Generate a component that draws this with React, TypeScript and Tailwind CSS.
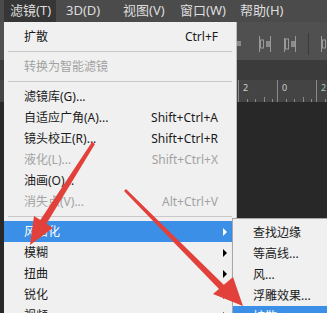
import clsx from 'clsx';

const font = { fontFamily: '"Noto Sans", "Noto Sans CJK SC", sans-serif' };

const topMenus = [
  { label: '滤镜(T)', w: 'w-[52px] pl-[6px] bg-[#363636]' },
  { label: '3D(D)', w: 'w-[57px] pl-[10px]' },
  { label: '视图(V)', w: 'w-[57px] pl-[10px]' },
  { label: '窗口(W)', w: 'w-[60px] pl-[10px]' },
  { label: '帮助(H)', w: 'w-[60px] pl-[10px]' },
];

type Row =
  | { sep: true }
  | { sep?: false; label: string; shortcut?: string; disabled?: boolean; sub?: boolean; active?: boolean };

const filterMenu: Row[] = [
  { label: '扩散', shortcut: 'Ctrl+F' },
  { sep: true },
  { label: '转换为智能滤镜', disabled: true },
  { sep: true },
  { label: '滤镜库(G)...' },
  { label: '自适应广角(A)...', shortcut: 'Shift+Ctrl+A' },
  { label: '镜头校正(R)...', shortcut: 'Shift+Ctrl+R' },
  { label: '液化(L)...', shortcut: 'Shift+Ctrl+X', disabled: true },
  { label: '油画(O)...' },
  { label: '消失点(V)...', shortcut: 'Alt+Ctrl+V', disabled: true },
  { sep: true },
  { label: '风格化', sub: true, active: true },
  { label: '模糊', sub: true },
  { label: '扭曲', sub: true },
  { label: '锐化', sub: true },
  { label: '视频', sub: true },
];

const stylizeMenu = [
  { label: '查找边缘' },
  { label: '等高线...' },
  { label: '风...' },
  { label: '浮雕效果...' },
  { label: '扩散...', active: true },
];

const rulerMarks = [
  { n: '2', color: 'text-[#cfcfcf]' },
  { n: '0', color: 'text-[#cfcfcf]' },
  { n: '2', color: 'text-[#9fd0b0]' },
];

function MenuRow({ row }: { row: Row }) {
  if (row.sep) {
    return <div className="mx-[4px] my-[4px] h-px bg-[#c9c9c9]" />;
  }
  return (
    <div
      className={clsx(
        'flex h-[21px] items-center pl-[20px] pr-[9px] text-[12px] whitespace-nowrap',
        row.active ? 'bg-[#3b8fe6] text-white' : row.disabled ? 'text-[#a2a2a2]' : 'text-[#1a1a1a]'
      )}
    >
      <span className="flex-1">{row.label}</span>
      {row.shortcut && <span>{row.shortcut}</span>}
      <span className="ml-[5px] flex w-[4px] justify-end">
        {row.sub && (
          <span
            className={clsx(
              'h-0 w-0 border-y-[4px] border-l-[4px] border-y-transparent',
              row.active ? 'border-l-white' : 'border-l-black'
            )}
          />
        )}
      </span>
    </div>
  );
}

function AlignIcon({ variant }: { variant: number }) {
  return (
    <svg width="14" height="18" viewBox="0 0 14 18" className="shrink-0">
      {variant === 0 && (
        <>
          <rect x="1" y="1" width="1" height="16" fill="#9a9a9a" />
          <rect x="2" y="6" width="6" height="5" fill="#8c8c8c" />
        </>
      )}
      {variant === 1 && (
        <>
          <rect x="1" y="1" width="1" height="16" fill="#9a9a9a" />
          <rect x="2.5" y="5" width="3" height="8" fill="none" stroke="#9a9a9a" />
          <rect x="8" y="6" width="4" height="6" fill="#8c8c8c" />
          <rect x="12" y="1" width="1" height="16" fill="#9a9a9a" />
        </>
      )}
      {variant === 2 && (
        <>
          <rect x="1" y="3" width="1" height="14" fill="#9a9a9a" />
          <rect x="2.5" y="4" width="3" height="10" fill="none" stroke="#9a9a9a" />
          <rect x="8" y="6" width="4" height="6" fill="#8c8c8c" />
          <rect x="12" y="1" width="1" height="16" fill="#9a9a9a" />
        </>
      )}
    </svg>
  );
}

export default function App() {
  return (
    <div className="relative h-[313px] w-[327px] overflow-hidden bg-[#282828]" style={font}>
      {/* Workspace */}
      <div className="flex h-full flex-col">
        <div className="flex h-[22px] shrink-0 items-stretch bg-[#4b4b4b] text-[13px] text-[#dedede]">
          <div className="w-[4px]" />
          {topMenus.map((m) => (
            <div key={m.label} className={clsx('flex shrink-0 items-center whitespace-nowrap', m.w)}>
              {m.label}
            </div>
          ))}
        </div>
        <div className="flex flex-1">
          <div className="w-[4px] bg-[#333333]" />
          <div className="flex flex-1 flex-col">
            <div className="flex h-[38px] items-center gap-[11px] bg-[#505050] pl-[233px] pt-[6px]">
              <AlignIcon variant={0} />
              <AlignIcon variant={1} />
              <AlignIcon variant={2} />
              <div className="h-[22px] w-px bg-[#3a3a3a]" />
              <AlignIcon variant={1} />
            </div>
            <div className="h-[20px] bg-[#3b3b3b]" />
            <div className="flex h-[22px] items-start bg-[#444444] pl-[238px] text-[9px]">
              {rulerMarks.map((m, i) => (
                <div key={i} className="flex h-full w-[39px] shrink-0 flex-col border-l border-[#8a8a8a]">
                  <span className={clsx('pl-[4px] pt-[2px] leading-[12px]', m.color)}>{m.n}</span>
                  <div className="mt-auto flex h-[5px] items-end justify-around pl-[4px]">
                    <span className="h-[3px] w-px bg-[#8a8a8a]" />
                    <span className="h-[3px] w-px bg-[#8a8a8a]" />
                    <span className="h-[5px] w-px bg-[#8a8a8a]" />
                    <span className="h-[3px] w-px bg-[#8a8a8a]" />
                  </div>
                </div>
              ))}
            </div>
            <div className="flex-1 bg-[#282828]" />
          </div>
        </div>
      </div>

      {/* Filter menu */}
      <div className="absolute left-[4px] top-[22px] w-[233px] border-r border-[#bdbdbd] bg-[#f0f0f0] pt-[4px]">
        {filterMenu.map((row, i) => (
          <MenuRow key={i} row={row} />
        ))}
      </div>

      {/* Stylize submenu */}
      <div className="absolute left-[232px] top-[218px] w-[120px] border border-[#a8a8a8] bg-[#f0f0f0] pt-[3px] shadow-[2px_2px_3px_rgba(0,0,0,0.3)]">
        {stylizeMenu.map((row) => (
          <div
            key={row.label}
            className={clsx(
              'flex h-[21px] items-center pl-[20px] text-[12px] whitespace-nowrap',
              row.active ? 'bg-[#3b8fe6] text-white' : 'text-[#1a1a1a]'
            )}
          >
            {row.label}
          </div>
        ))}
      </div>

      {/* Red annotation arrows */}
      <svg className="pointer-events-none absolute inset-0" width="327" height="313" viewBox="0 0 327 313">
        <polygon points="92,142 95,144 45,226 39,222" fill="#e2403a" />
        <polygon points="30,245 34,216 53,228" fill="#e2403a" />
        <polygon points="124,191 126,189 225,286 220,290" fill="#e2403a" />
        <polygon points="243,306 213,294 233,277" fill="#e2403a" />
      </svg>
    </div>
  );
}
